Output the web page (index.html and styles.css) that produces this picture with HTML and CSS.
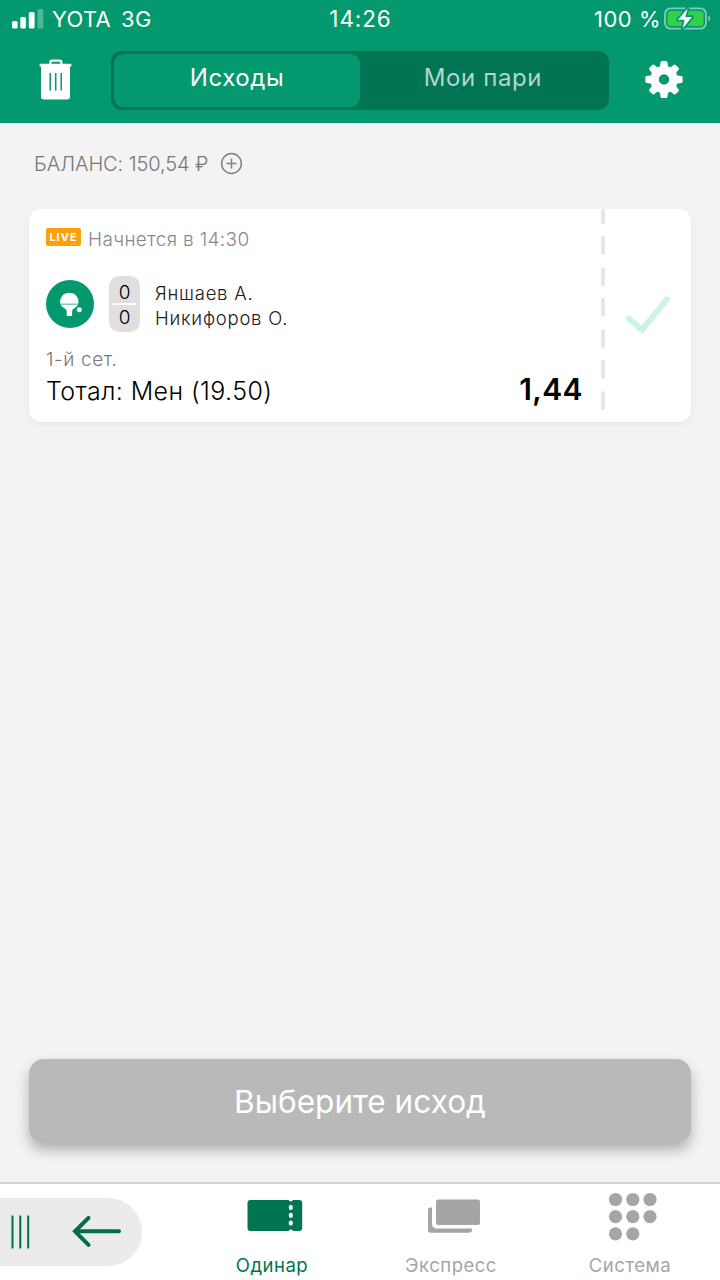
FILE: index.html
```html
<!DOCTYPE html>
<html lang="ru">
<head>
    <meta charset="UTF-8">
    <meta name="viewport" content="width=device-width, initial-scale=1.0">
    <title>Исходы</title>
    <link rel="stylesheet" href="styles.css">
</head>
<body>
    <header class="header">
        <div class="status-bar">
            <div class="status-left">
                <svg class="signal" width="32" height="20" viewBox="0 0 32 20" fill="#fff">
                    <rect x="0" y="12" width="5.6" height="7.5" rx="1.6"/>
                    <rect x="8.3" y="8" width="5.6" height="11.5" rx="1.6"/>
                    <rect x="16.8" y="3" width="5.8" height="16.5" rx="1.6"/>
                    <rect x="25.5" y="0" width="5.8" height="19.5" rx="1.6" opacity="0.3"/>
                </svg>
                <span class="carrier">YOTA</span>
                <span class="network">3G</span>
            </div>
            <div class="clock">14:26</div>
            <div class="status-right">
                <span class="percent">100 %</span>
                <svg class="battery" width="47" height="24" viewBox="0 0 47 24">
                    <rect x="1" y="1.4" width="41" height="20.2" rx="5.5" fill="none" stroke="#fff" stroke-opacity="0.5" stroke-width="1.8"/>
                    <path d="M44.4 8.5v6c2.4-1 2.4-5 0-6z" fill="#fff" fill-opacity="0.5"/>
                    <rect x="3.5" y="4" width="36" height="15" rx="3" fill="#32d14b"/>
                    <path d="M23.6 1.5L14 12.8h6.6L18.6 21.5 28 10h-6.6z" fill="#fff" stroke="#03986e" stroke-width="3.6" stroke-linejoin="round" paint-order="stroke"/>
                </svg>
            </div>
        </div>
        <div class="toolbar">
            <svg class="trash" width="34" height="42" viewBox="0 0 34 42">
                <path d="M11.4 5V3.2Q11.4 1.6 13 1.6h7.8Q22.4 1.6 22.4 3.2V5" fill="none" stroke="#fff" stroke-width="2.2"/>
                <rect x="0.5" y="4.8" width="32" height="2.8" rx="1.2" fill="#fff"/>
                <path d="M2 6h29v31.6a3 3 0 0 1-3 3H5a3 3 0 0 1-3-3z" fill="#fff"/>
                <path d="M11.2 14v17.4M16.7 14v17.4M22.2 14v17.4" stroke="#03986e" stroke-width="1.5"/>
            </svg>
            <div class="switch">
                <div class="switch-item active">Исходы</div>
                <div class="switch-item">Мои пари</div>
            </div>
            <svg class="gear" width="38" height="38" viewBox="-19 -18.5 38 38">
                <g fill="#fff">
                    <path id="tooth" d="M-4.3 -11L-3.4 -17.4Q-3.1 -18.6 -2 -18.6H2Q3.1 -18.6 3.4 -17.4L4.3 -11z"/>
                    <use href="#tooth" transform="rotate(45)"/>
                    <use href="#tooth" transform="rotate(90)"/>
                    <use href="#tooth" transform="rotate(135)"/>
                    <use href="#tooth" transform="rotate(180)"/>
                    <use href="#tooth" transform="rotate(225)"/>
                    <use href="#tooth" transform="rotate(270)"/>
                    <use href="#tooth" transform="rotate(315)"/>
                </g>
                <circle r="9.4" fill="none" stroke="#fff" stroke-width="8.8"/>
                <circle r="5" fill="#03986e"/>
            </svg>
        </div>
    </header>

    <main class="content">
        <div class="balance">
            <span class="balance-text">БАЛАНС: 150,54 ₽</span>
            <svg width="23" height="23" viewBox="0 0 23 23" fill="none" stroke="#818181" stroke-width="1.5">
                <circle cx="11.5" cy="11.5" r="9.9"/>
                <path d="M6.5 11.5h10M11.5 6.5v10"/>
            </svg>
        </div>

        <section class="card">
            <div class="card-info">
                <div class="start">
                    <span class="live">LIVE</span>
                    <span class="start-time">Начнется в 14:30</span>
                </div>
                <div class="match">
                    <svg class="sport" width="48" height="48" viewBox="0 0 48 48">
                        <circle cx="24" cy="24" r="24" fill="#03986e"/>
                        <path d="M14.3 23.8a9.2 9.2 0 1 1 18 0z" fill="#fff"/>
                        <path d="M14.5 24.6h17.6q-.8 1.6-2.4 2.7l-2.4 1.8q-1.2.9-1.2 2.4V36h-5.4v-4.5q0-1.5-1.2-2.4l-2.6-1.8q-1.6-1.1-2.4-2.7z" fill="#fff"/>
                        <circle cx="33.3" cy="29.8" r="2.5" fill="#fff"/>
                    </svg>
                    <div class="score">
                        <span class="score-row">0</span>
                        <span class="score-row">0</span>
                    </div>
                    <div class="players">
                        <div class="player">Яншаев А.</div>
                        <div class="player">Никифоров О.</div>
                    </div>
                </div>
                <div class="period">1-й сет.</div>
                <div class="bet">
                    <span class="bet-name">Тотал: Мен (19.50)</span>
                    <span class="odds">1,44</span>
                </div>
            </div>
            <svg class="divider" width="4" height="213" viewBox="0 0 4 213">
                <path d="M2 2v11.5M2 29v15M2 60v15M2 91v15M2 122v15M2 153v15M2 184v15" stroke="#e6e6e6" stroke-width="4" stroke-linecap="round"/>
            </svg>
            <div class="check">
                <svg width="46" height="40" viewBox="0 0 46 40">
                    <path d="M3.5 23.5L17 34.8 42 4.2" fill="none" stroke="#ccf3e7" stroke-width="5.8" stroke-linecap="round"/>
                </svg>
            </div>
        </section>

        <button class="submit">Выберите исход</button>
    </main>

    <nav class="tabs">
        <div class="back">
            <svg width="110" height="36" viewBox="0 0 110 36" fill="none" stroke="#036c4c">
                <path d="M1.5 1.5v33M9.3 1.5v33M17.2 1.5v33" stroke-width="2"/>
                <path d="M108 17.3H64M77.5 3.8L64 17.3l13.5 13.5" stroke-width="4" stroke-linecap="round"/>
            </svg>
        </div>
        <div class="tab active">
            <svg class="tab-icon" width="62" height="52" viewBox="-6 0 62 52">
                <path d="M3.5 10H41.6a2.4 2.4 0 0 0 4.4 0H52.2a3 3 0 0 1 3 3V38a3 3 0 0 1-3 3H46a2.4 2.4 0 0 0-4.4 0H3.5a3 3 0 0 1-3-3V13a3 3 0 0 1 3-3z" fill="#007453"/>
                <g fill="#fff">
                    <rect x="41.8" y="15" width="4" height="5" rx="1.9"/>
                    <rect x="41.8" y="22.8" width="4" height="5" rx="1.9"/>
                    <rect x="41.8" y="30.6" width="4" height="5" rx="1.9"/>
                </g>
            </svg>
            <span class="tab-label">Одинар</span>
        </div>
        <div class="tab">
            <svg class="tab-icon" width="62" height="52" viewBox="-6 0 62 52" fill="#a5a5a5">
                <rect x="10" y="9.5" width="44" height="25.5" rx="2.5"/>
                <path d="M6 17.5H4.5a2.5 2.5 0 0 0-2.5 2.5V40a2.7 2.7 0 0 0 2.7 2.7H43a3 3 0 0 0 3-3V38.5H10.5a4.5 4.5 0 0 1-4.5-4.5z"/>
            </svg>
            <span class="tab-label">Экспресс</span>
        </div>
        <div class="tab">
            <svg class="tab-icon" width="54" height="52" viewBox="2 0 54 52" fill="#a5a5a5">
                <circle cx="14.5" cy="9.5" r="6.6"/>
                <circle cx="31.8" cy="9.5" r="6.6"/>
                <circle cx="49" cy="9.5" r="6.6"/>
                <circle cx="14.5" cy="26.6" r="6.6"/>
                <circle cx="31.8" cy="26.6" r="6.6"/>
                <circle cx="49" cy="26.6" r="6.6"/>
                <circle cx="14.5" cy="43.8" r="6.6"/>
                <circle cx="31.8" cy="43.8" r="6.6"/>
            </svg>
            <span class="tab-label">Система</span>
        </div>
    </nav>
</body>
</html>
```
FILE: styles.css
```css
* {
    box-sizing: border-box;
}

body {
    background: #f3f3f3;
    color: #000;
    font-family: 'Inter', 'Liberation Sans', sans-serif;
    margin: 0;
    height: 1280px;
    display: flex;
    flex-direction: column;
    overflow: hidden;
}

svg {
    display: block;
    flex-shrink: 0;
}

.header {
    background: #03986e;
    height: 122.5px;
    flex-shrink: 0;
}

.status-bar {
    display: grid;
    grid-template-columns: 1fr auto 1fr;
    align-items: center;
    height: 38px;
    padding: 0 9px 0 12px;
    color: #fff;
    font-size: 22px;
    line-height: 38px;
    letter-spacing: 0.3px;
}

.status-left,
.status-right {
    display: flex;
    align-items: center;
}

.status-right {
    justify-content: flex-end;
}

.carrier {
    margin-left: 8px;
}

.network {
    margin-left: 10px;
}

.clock {
    font-size: 22.5px;
    letter-spacing: 0.9px;
    margin-right: 2px;
}

.percent {
    letter-spacing: 0.5px;
}

.battery {
    margin-left: 3px;
}

.toolbar {
    display: flex;
    align-items: center;
    height: 84px;
    padding: 0 37px 0 39px;
}

.switch {
    display: flex;
    width: 498px;
    height: 59px;
    margin-left: 38px;
    padding: 3px;
    background: #007453;
    border-radius: 11px;
}

.switch-item {
    flex: 1;
    border-radius: 9px;
    color: #b3d5cb;
    font-size: 24px;
    letter-spacing: 0.6px;
    line-height: 48px;
    text-align: center;
}

.switch-item.active {
    background: #03986e;
    color: #fff;
}

.gear {
    margin-left: 36px;
}

.content {
    display: flex;
    flex-direction: column;
    flex: 1;
    padding: 28px 29px 39px;
}

.balance {
    display: flex;
    align-items: center;
    height: 26px;
    padding-left: 5px;
    color: #777;
    font-size: 20px;
    font-weight: 300;
    letter-spacing: -0.1px;
}

.balance svg {
    margin-left: 12px;
}

.card {
    display: flex;
    height: 213px;
    margin-top: 32px;
    background: #fff;
    border-radius: 12px;
    box-shadow: 0 3px 6px rgba(0, 0, 0, 0.05);
}

.card-info {
    width: 572px;
    padding: 17px 18px 0 17px;
}

.start {
    display: flex;
    align-items: center;
    height: 26px;
}

.live {
    width: 35px;
    height: 18px;
    margin-top: -3px;
    background: #ff9f0a;
    border-radius: 2px;
    color: #fff;
    font-size: 11px;
    font-weight: 700;
    letter-spacing: 1px;
    line-height: 18px;
    text-align: center;
}

.start-time {
    margin: 2px 0 0 7px;
    color: #888;
    font-size: 19px;
    font-weight: 300;
    letter-spacing: 0.35px;
}

.match {
    display: flex;
    align-items: center;
    height: 56px;
    margin-top: 24px;
}

.score {
    width: 31px;
    height: 56px;
    margin-left: 15px;
    padding: 4px;
    background: #dfdfdf;
    border-radius: 10px;
}

.score-row {
    display: block;
    height: 25px;
    font-size: 19px;
    font-weight: 300;
    line-height: 25px;
    text-align: center;
}

.score-row:first-child {
    border-bottom: 2px solid #fff;
}

.players {
    margin: 4px 0 0 15px;
    color: #202020;
    font-size: 18.5px;
    font-weight: 300;
    letter-spacing: 0.75px;
    line-height: 25px;
}

.period {
    margin-top: 15px;
    color: #777;
    font-size: 19px;
    font-weight: 300;
    letter-spacing: 0.6px;
    line-height: 26px;
}

.bet {
    display: flex;
    align-items: center;
    justify-content: space-between;
    height: 36px;
}

.bet-name {
    font-size: 25px;
    font-weight: 300;
    letter-spacing: 0.4px;
}

.odds {
    font-size: 30px;
    font-weight: 600;
    letter-spacing: 0.4px;
    margin-top: -4px;
}

.check {
    display: flex;
    align-items: center;
    justify-content: center;
    flex: 1;
}

.submit {
    height: 84px;
    margin-top: auto;
    border: none;
    border-radius: 15px;
    background: #b9b9b9;
    box-shadow: 0 7px 13px rgba(0, 0, 0, 0.28);
    color: #fff;
    font-family: inherit;
    font-size: 31.6px;
}

.tabs {
    display: grid;
    grid-template-columns: repeat(4, 180px);
    height: 98px;
    flex-shrink: 0;
    background: #fff;
    border-top: 2px solid #d2d2d2;
}

.back {
    display: flex;
    align-items: center;
    width: 142px;
    height: 68px;
    margin-top: 14px;
    padding-left: 11px;
    background: #ebebeb;
    border-radius: 0 34px 34px 0;
}

.tab {
    display: flex;
    flex-direction: column;
    align-items: center;
    padding: 6px 0 0 2px;
    color: #a5a5a5;
}

.tab.active {
    padding-left: 4px;
    color: #007453;
}

.tab:last-child {
    padding-left: 0;
}

.tab-label {
    margin-top: 10px;
    font-size: 18.5px;
    letter-spacing: 0.5px;
    line-height: 26px;
}
```
